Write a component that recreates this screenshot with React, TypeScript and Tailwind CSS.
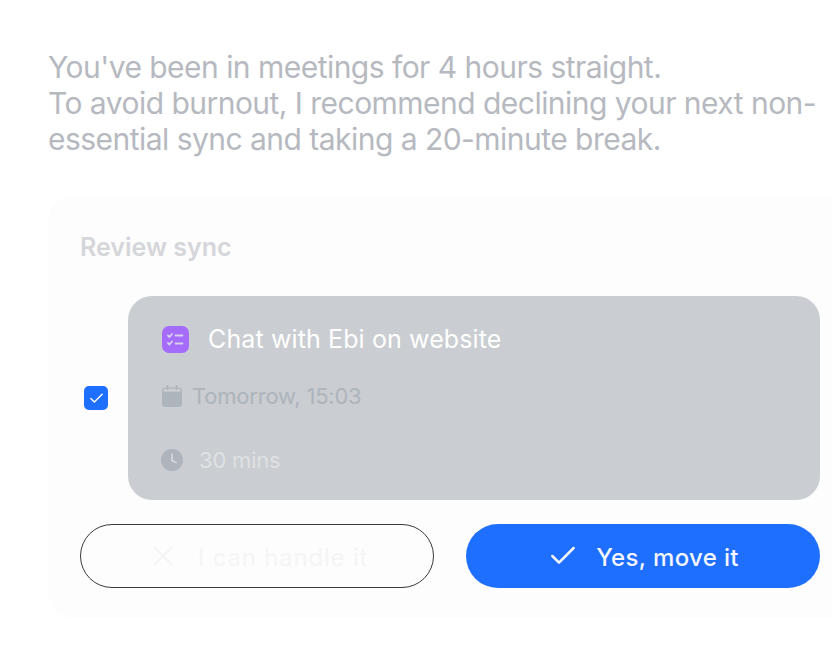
import { Check, X } from 'lucide-react'

const TaskIcon = () => (
    <div className="flex h-[27px] w-[27px] items-center justify-center rounded-[7px] bg-[#a56bfa]">
        <svg width="21" height="21" viewBox="0 0 21 21" fill="none" stroke="#d9d0ea" strokeWidth="1.8" strokeLinecap="round" strokeLinejoin="round">
            <path d="M3 6.5l1.5 1.5L7 5" />
            <path d="M3 14l1.5 1.5L7 12.5" />
            <path d="M10.5 6.5h7" />
            <path d="M10.5 14.5h7" />
        </svg>
    </div>
)

const CalendarIcon = () => (
    <svg width="20" height="22" viewBox="0 0 20 22" fill="none">
        <rect x="0" y="2.5" width="20" height="19.5" rx="3" fill="#adb4bc" />
        <rect x="1.2" y="3.7" width="17.6" height="3" rx="1.5" fill="#cacdd1" />
        <path d="M5.5 0.5v4M14.5 0.5v4" stroke="#adb4bc" strokeWidth="1.6" strokeLinecap="round" />
    </svg>
)

const ClockIcon = () => (
    <svg width="22" height="22" viewBox="0 0 22 22" fill="none">
        <circle cx="11" cy="11" r="11" fill="#adb4bc" />
        <path d="M11 5.5v6l4 2" stroke="#d5d8dc" strokeWidth="1.8" strokeLinecap="round" strokeLinejoin="round" />
    </svg>
)

export default function App() {
    return (
        <div className="h-[649px] w-[832px] overflow-hidden bg-white font-['Inter',sans-serif]">
            <div className="pl-12 pt-[49px]">
                <p className="w-[784px] text-[30px] leading-[36px] tracking-[-0.53px] text-[#b6b9bf]">
                    You've been in meetings for 4 hours straight.
                    <br />
                    To avoid burnout, I recommend declining your next non-
                    <br />
                    essential sync and taking a 20-minute break.
                </p>
            </div>

            <div className="ml-12 mt-[39px] h-[422px] w-[804px] rounded-tl-[24px] rounded-bl-[24px] bg-[#fdfdfd] pl-8 pt-[35px]">
                <h2 className="text-[25px] leading-8 font-semibold text-[#d5d6da]">Review sync</h2>

                <div className="mt-[33px] flex w-[740px] items-center">
                    <div className="ml-1 flex h-6 w-6 items-center justify-center rounded-[5px] bg-[#1f6fff]">
                        <Check size={17} color="#ffffff" strokeWidth={2} />
                    </div>
                    <div className="ml-5 flex h-[204px] flex-1 flex-col rounded-3xl bg-[#cacdd1] pl-[34px] pt-[29px]">
                        <div className="flex items-center gap-[19px]">
                            <TaskIcon />
                            <span className="text-[25px] leading-7 tracking-[0.12px] text-white">Chat with Ebi on website</span>
                        </div>
                        <div className="mt-[29px] flex items-center gap-2.5">
                            <CalendarIcon />
                            <span className="text-[22px] leading-7 tracking-[-0.2px] text-[#adb4bc]">Tomorrow, 15:03</span>
                        </div>
                        <div className="mt-9 -ml-[1px] flex items-center gap-4">
                            <ClockIcon />
                            <span className="text-[22px] leading-7 tracking-[-0.2px] text-[#dfe1e4]">30 mins</span>
                        </div>
                    </div>
                </div>

                <div className="mt-6 flex w-[740px] gap-8">
                    <button className="flex h-16 w-[354px] items-center justify-center gap-[18px] rounded-full border border-[#3a3a3a] text-2xl text-[#f5f5f6]">
                        <X size={34} strokeWidth={1.5} />
                        <span className="pt-1 tracking-[0.8px]">I can handle it</span>
                    </button>
                    <button className="flex h-16 w-[354px] items-center justify-center gap-[17px] rounded-full bg-[#1f6fff] text-2xl font-[450] text-[#f3f6ff]">
                        <Check size={32} strokeWidth={1.9} />
                        <span className="pt-1 tracking-[0.35px]">Yes, move it</span>
                    </button>
                </div>
            </div>
        </div>
    )
}
